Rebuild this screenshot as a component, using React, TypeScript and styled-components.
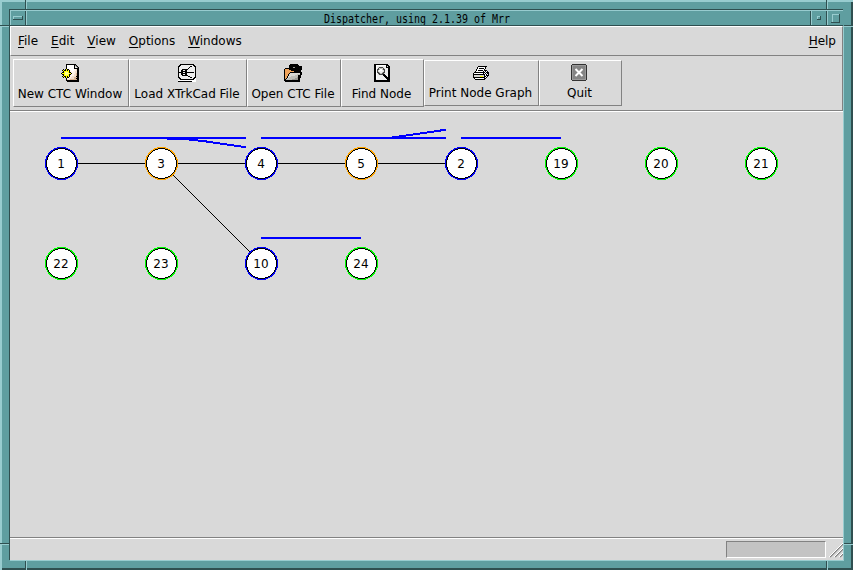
import React from 'react';
import styled, { createGlobalStyle } from 'styled-components';

const teal = '#5f9ea0';
const light = '#98cccf';
const dark = '#2f4f50';

const Global = createGlobalStyle`
  * { box-sizing: border-box; }
  html, body { margin: 0; padding: 0; overflow: hidden; }
  body { font: 12px "DejaVu Sans", sans-serif; color: #000; }
`;
const Frame = styled.div`
  width: 853px; height: 570px; background: ${teal};
  display: grid; grid-template-rows: 9px 1fr 9px; grid-template-columns: 9px 1fr 9px;
  position: relative;
  overflow: hidden;
`;
const Edge = styled.svg` position: absolute; inset: 0; shape-rendering: crispEdges; pointer-events: none; `;
const Win = styled.div` grid-area: 2 / 2; display: flex; flex-direction: column; width: 834px; height: 551px; padding: 1px 0 0 1px; `;
const TitleBar = styled.div`
  height: 16px; flex: none; display: flex; align-items: center; justify-content: center;
  font: 10px/15px "DejaVu Sans Mono", monospace; letter-spacing: -0.02px; white-space: pre; padding-right: 19px;
  span { display: block; transform: scaleY(1.2); }
`;
const MenuBar = styled.nav`
  height: 30px; flex: none; display: flex; align-items: center; gap: 13px; padding: 0 6px 0 7px;
  background: #d9d9d9; border: 1px solid; border-color: #fff #828282 #828282 #fff;
`;
const MenuItem = styled.span<{ $end?: boolean }>`
  line-height: 14px; margin-left: ${p => (p.$end ? 'auto' : '0')};
  u { text-underline-offset: 2px; text-decoration-thickness: 1px; text-decoration-skip-ink: none; }
`;
const ToolBar = styled.div`
  height: 55px; flex: none; display: flex; align-items: center; padding: 0 2px 0 3px; background: #d9d9d9;
  border-bottom: 1px solid #828282; border-right: 1px solid #828282;
`;
const Tool = styled.button<{ $w: number; $short?: boolean }>`
  width: ${p => p.$w}px; height: ${p => (p.$short ? 46 : 48)}px; flex: none;
  display: flex; flex-direction: column; align-items: center; padding: ${p => (p.$short ? 3 : 4)}px 2px 0 0;
  gap: ${p => (p.$short ? 4 : 5)}px;
  font: inherit; line-height: 14px; white-space: nowrap; color: #000; background: #d9d9d9;
  border: 1px solid; border-color: #fff #828282 #828282 #fff; border-radius: 0;
`;
const Icon = styled.svg` width: 18px; height: 18px; display: block; flex: none; shape-rendering: crispEdges; `;
const Canvas = styled.div`
  height: 426px; flex: none; background: #d9d9d9; border-top: 1px solid #fff;
  svg { display: block; margin-top: -1px; }
`;
const Status = styled.div`
  flex: 1; display: flex; justify-content: flex-end; background: #d9d9d9;
  border-top: 1px solid #828282; box-shadow: inset 0 1px #fff; padding: 3px 0 0;
`;
const Progress = styled.div`
  width: 100px; height: 17px; background: #c3c3c3; border: 1px solid; border-color: #828282 #fff #fff #828282;
`;
const Grip = styled.svg` width: 17px; height: 17px; `;

const palette: Record<string, string> = {
  k: '#000', w: '#fff', y: '#ff0', l: '#ffff8c', p: '#f3dfcc', q: '#fff4e8', t: '#d9b595',
  g: '#777', s: '#bdbdb8', d: '#999994', o: '#f0a45c', c: '#d8d8d4', e: '#eee', m: '#444',
};

const PixelIcon = ({ rows }: { rows: string[] }) => (
  <Icon viewBox="0 0 18 18">
    {rows.flatMap((row, y) =>
      [...row].map((ch, x) => (ch === '.' ? null : <rect key={`${x}-${y}`} x={x} y={y} width="1" height="1" fill={palette[ch]} />)),
    )}
  </Icon>
);

const newIcon = [
  '.....kkkkkkkkkk...',
  '.....kwwwwwwwkgk..',
  '.....kwwwwwwwkcgk.',
  '.....kwwwwwwwkeegk',
  '.....kwwwwwwwkkkkk',
  '..k.kykkqwwwwqqpkk',
  '.kykkykykqwwwqqpkk',
  '..kyyyyykqqwqqppkk',
  '.kkylllykkqqqqppkk',
  'kyyyllllyykqqqptkk',
  '.kkylllykkqqqpptkk',
  '..kyyyyykqqqqpptkk',
  '.kykkykykqqppppkkk',
  '..k.kykkqqppptttkk',
  '.....kqqpppppttkkk',
  '.....kppptttttttkk',
  '.....kkkkkkkkkkkkk',
  '......kkkkkkkkkkkk',
];
const trackIcon = [
  '..kkkkkkkkkkkkkk..',
  '.kkeeeeeeeeeeeekk.',
  'kkeeeeeeeeeekkeekk',
  'keeeeeeeeeekeeeeek',
  'keeeeeeeeekeeeeeek',
  'keeekkkkkkeeeeeeek',
  'keekkeekkeeeeeeeek',
  'keekkkkkkeeeeeeeek',
  'kkkkkeekkkkkkkkkek',
  'keekkkkkkeeeeeeeek',
  'keekkeekkeeeeeeeek',
  'keeekkkkkkeeeeeeek',
  'keeeeeeeeekkeeeeek',
  'kkeeeeeeeeeekkeekk',
  '.kkeeeeeeeeeeeekkw',
  '..kkkkkkkkkkkkkkww',
  'wwwwwwwwwwwwwwwwww',
  'kkkkkkkkkkkkkkwwww',
];
const folderIcon = [
  '......kkkkkkkk....',
  '.....kkkkkkkkkk...',
  '.....kkkkkkkkkkkkk',
  '.....kkkkddkkkkkkk',
  '.kkkkkkkkkkkkkkkkk',
  'kooookkkkkkkkkkkkk',
  'kooooookkkkkkkkkk.',
  'koooooooookkkkkkk.',
  'koooookkkkkkkkkkkk',
  'kooookcccccccccckk',
  'koookccccccccssskk',
  'koookccccccssskkk.',
  'kookcccssssssskkk.',
  'kookcssssssssdkkk.',
  'kokcsssssssdddkk..',
  'kkssssssddddddkk..',
  'kkkkkkkkkkkkkkkk..',
  '.kkkkkkkkkkkkkkk..',
];
const findIcon = [
  '.kkkkkkkkkkkkkk...',
  '.kkwwwwwwwwwwkkk..',
  '.kkweeeeeeeeekckk.',
  '.kkwecmmmmceekkkk.',
  '.kkwemcsscmceeekk.',
  '.kkwmmswwsmmeeekk.',
  '.kkwmcwwwecmeeekk.',
  '.kkwmceeeecmeeekk.',
  '.kkwmmseesmmeeekk.',
  '.kkwemmssmmceeekk.',
  '.kkwecmmmmkkeeekk.',
  '.kkweeeeeekkkeekk.',
  '.kkweeeeeeekkkekk.',
  '.kkweeeeeeeekkkkk.',
  '.kkweeeeeeeeekkkk.',
  '.kkeeeeeeeeeeekkk.',
  '.kkkkkkkkkkkkkkkk.',
  '.kkkkkkkkkkkkkkkk.',
];
const printIcon = [
  '..................',
  '..................',
  '......kkkkkkkkk...',
  '.....kwwwwwwwk....',
  '.....kwkkkkkwk....',
  '....kwwwwwwwk.....',
  '....kwkkkkkwkkk...',
  '...kwwwwwwwkwkwk..',
  '..kkkkkkkkkkkwkkk.',
  '.kwwwwwwwwwkwkwkk.',
  '.kkkkkkkkkkkkwkwk.',
  '.kcccccccccckwkkk.',
  '.kccccccyyyckkwk..',
  '.kkkkkkkkkkkkwk...',
  '..kwwwwwwwwwkk....',
  '...kkkkkkkkkk.....',
];

const QuitIcon = () => (
  <Icon viewBox="0 0 18 18">
    <path d="M1 1H15V0H1zM0 1H1V16H0zM15 1H16V16H15zM1 16H15V17H1z" fill="#333" />
    <rect x="1" y="1" width="14" height="15" fill="#858585" />
    <rect x="1.5" y="1.5" width="13" height="14" fill="none" stroke="#9b9b9b" />
    <path d="M4.5 5l7 7M11.5 5l-7 7" stroke="#fff" strokeWidth="2" shapeRendering="auto" />
  </Icon>
);

const nodes: [string, number, number, string][] = [
  ['1', 61, 163, '#00f'], ['3', 161, 163, '#ffa500'], ['4', 261, 163, '#00f'], ['5', 361, 163, '#ffa500'],
  ['2', 461, 163, '#00f'], ['19', 561, 163, '#0f0'], ['20', 661, 163, '#0f0'], ['21', 761, 163, '#0f0'],
  ['22', 61, 263, '#0f0'], ['23', 161, 263, '#0f0'], ['10', 261, 263, '#00f'], ['24', 361, 263, '#0f0'],
];

const Graph = () => (
  <svg width="832" height="426" viewBox="10 111 832 426">
    <g shapeRendering="crispEdges" fill="none">
      <path d="M61 138H246M261 138H446M461 138H561M261 238H361" stroke="#00f" strokeWidth="2" />
      <path d="M167 139L187 139.3L203 141L246 147.3M392 137.5L410 135L446 129.7" stroke="#00f" strokeWidth="2" />
      <path d="M77 163.5H146M177 163.5H246M277 163.5H346M377 163.5H446M173 175L250 252" stroke="#000" />
      {nodes.map(([id, x, y, color]) => (
        <g key={id}>
          <circle cx={x + 0.5} cy={y + 0.5} r="16.6" fill={color} />
          <circle cx={x + 0.5} cy={y + 0.5} r="15" fill="#fff" stroke="#000" />
        </g>
      ))}
    </g>
    <g fontFamily="DejaVu Sans, sans-serif" fontSize="12" textAnchor="middle">
      {nodes.map(([id, x, y]) => <text key={id} x={x} y={y + 5}>{id}</text>)}
    </g>
  </svg>
);

const Decorations = () => (
  <Edge width="853" height="570" fill="none">
    <path d="M0 1H853M1 0V570" stroke={light} strokeWidth="2" />
    <path d="M852 2V570M2 569H853" stroke={dark} strokeWidth="2" />
    <path d="M9 9.5H843M9.5 9V560M25.5 0V25M826.5 0V25M0 25.5H843M810.5 10V25M0 543.5H9M844 543.5H853M25.5 561V570M826.5 561V570M844 25.5H853" stroke={dark} />
    <path d="M10 10.5H843M10.5 10V25M26.5 0V9M26.5 10V25M827.5 0V9M827.5 10V25M811.5 10V25M0 26.5H9M843 26.5H853M0 544.5H9M844 544.5H853M26.5 561V570M827.5 561V570M10 560.5H844M843.5 27V561" stroke={light} />
    <path d="M13 19.5V16.5H23M832.5 23V14.5H840M817.5 19V16.5H820" stroke={light} />
    <path d="M13 19.5H22.5V16M831 22.5H839.5V14M817 19.5H820.5V16" stroke={dark} />
  </Edge>
);

export default function App() {
  return (
    <>
      <Global />
      <Frame>
        <Win>
          <TitleBar><span>Dispatcher, using 2.1.39 of Mrr</span></TitleBar>
          <MenuBar>
            <MenuItem><u>F</u>ile</MenuItem><MenuItem><u>E</u>dit</MenuItem><MenuItem><u>V</u>iew</MenuItem>
            <MenuItem><u>O</u>ptions</MenuItem><MenuItem><u>W</u>indows</MenuItem><MenuItem $end><u>H</u>elp</MenuItem>
          </MenuBar>
          <ToolBar>
            <Tool $w={116}><PixelIcon rows={newIcon} />New CTC Window</Tool>
            <Tool $w={118}><PixelIcon rows={trackIcon} />Load XTrkCad File</Tool>
            <Tool $w={94}><PixelIcon rows={folderIcon} />Open CTC File</Tool>
            <Tool $w={83}><PixelIcon rows={findIcon} />Find Node</Tool>
            <Tool $w={115} $short><PixelIcon rows={printIcon} />Print Node Graph</Tool>
            <Tool $w={83} $short><QuitIcon />Quit</Tool>
          </ToolBar>
          <Canvas><Graph /></Canvas>
          <Status>
            <Progress />
            <Grip viewBox="826 541 17 17" stroke="#828282" strokeWidth="1.5"><path d="M830 557L843 544M835 557L843 549M840 557L843 554" /><path d="M829 557L843 543M834 557L843 548M839 557L843 553" stroke="#fff" strokeWidth="1" /></Grip>
          </Status>
        </Win>
        <Decorations />
      </Frame>
    </>
  );
}
